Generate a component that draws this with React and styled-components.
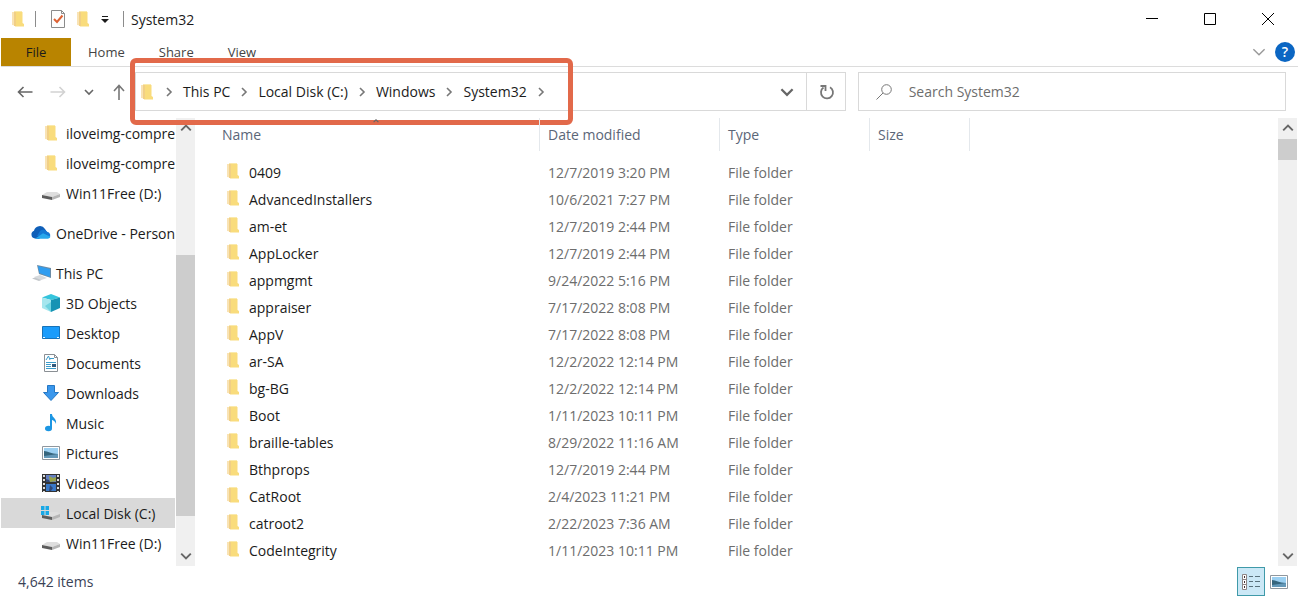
import React, { useState } from "react";
import styled, { createGlobalStyle } from "styled-components";

const GlobalStyle = createGlobalStyle`
    * {
        box-sizing: border-box;
    }

    body {
        margin: 0;
        background: #fff;
        color: #1b1b1b;
        font-family: "Open Sans", "Noto Sans", sans-serif;
        font-size: 14px;
        line-height: 20px;
    }

    button, input {
        font: inherit;
        color: inherit;
    }

    button {
        padding: 0;
        border: 0;
        background: none;
    }

    a {
        color: inherit;
        text-decoration: none;
    }

    ul, ol {
        margin: 0;
        padding: 0;
        list-style: none;
    }

    svg {
        display: block;
        flex: none;
    }
`;

/* ---------- icons ---------- */

const FolderIcon = () => (
    <svg width="12" height="16" viewBox="0 0 12 16">
        <path d="M0 1h3v13.500L0 14z" fill="#f9e3b4" />
        <path d="M2 0h8v11H2z" fill="#fae9ac" />
        <path d="M4 1h6.500v11l1.500 1v2.500H3z" fill="#f9dc7c" />
        <path d="M2 1h2v14H2z" fill="#f1cf86" />
    </svg>
);

const CheckDocIcon = () => (
    <svg width="14" height="18" viewBox="0 0 14 18" fill="none">
        <path d="M.5.5h10l3 3v14H.5z" fill="#fdfdfd" stroke="#8b8b8b" />
        <path d="M10.500.5v3h3" stroke="#8b8b8b" />
        <path d="M3 9l3 3 5.500-6.500" stroke="#dd6234" strokeWidth="2" />
    </svg>
);

const MoreIcon = () => (
    <svg width="8" height="8" viewBox="0 0 8 8">
        <path d="M1 1h6v1H1zM0 4h8L4 8z" fill="#1b1b1b" />
    </svg>
);

const ArrowIcon = ({ dir, color }) => (
    <svg width="16" height="16" viewBox="0 0 16 16" fill="none" stroke={color} strokeWidth="1.600">
        {dir === "left" && <path d="M15.500 8H1.500M6.500 3l-5 5 5 5" />}
        {dir === "right" && <path d="M.5 8h14M9.500 3l5 5-5 5" />}
        {dir === "up" && <path d="M8 16V2M3 7l5-5.500L13 7" />}
    </svg>
);

const rotations = { down: 0, left: 90, up: 180, right: 270 };

const Chevron = ({ dir = "down", size = 10, color = "#666", weight = 1.6 }) => (
    <svg width={size} height={size} viewBox="0 0 10 10" fill="none">
        <path
            d="M1 3l4 4 4-4"
            stroke={color}
            strokeWidth={weight}
            transform={`rotate(${rotations[dir]} 5 5)`}
        />
    </svg>
);

const RefreshIcon = () => (
    <svg width="16" height="16" viewBox="0 0 16 16" fill="none" stroke="#777" strokeWidth="1.800">
        <path d="M11 3.200a6 6 0 1 1-6.500.3" />
        <path d="M1.500 2h5v5" />
    </svg>
);

const SearchIcon = () => (
    <svg width="16" height="16" viewBox="0 0 16 16" fill="none" stroke="#777">
        <circle cx="10.500" cy="5.500" r="4.800" />
        <path d="M7 9L.5 15.500" />
    </svg>
);

const DriveShape = () => (
    <>
        <path d="M1 12l5-3h10l3 2-8 3z" fill="#dedede" />
        <path d="M11 14l8-3v3l-8 3z" fill="#b5b5b5" />
        <path d="M1 12l10 2v3L1 15z" fill="#5c5c5c" />
    </>
);

const DriveIcon = () => (
    <svg width="20" height="20" viewBox="0 0 20 20"><DriveShape /></svg>
);

const SystemDriveIcon = () => (
    <svg width="20" height="20" viewBox="0 0 20 20">
        <DriveShape />
        <path d="M0 3h3.500v4H0zM4.500 3H8v4H4.500zM0 8h3.500v4H0zM4.500 8H8v4H4.500z" fill="#18a8e6" />
    </svg>
);

const CloudIcon = () => (
    <svg width="20" height="20" viewBox="0 0 20 20">
        <path d="M4 15.500a4 4 0 0 1-1-7.700A6 6 0 0 1 14 6l2 3-8 7z" fill="#0f5fb8" />
        <path d="M9 8a4.500 4.500 0 0 1 7 .8 3.500 3.500 0 0 1 2 6.200L6 13z" fill="#1478d4" />
        <path d="M4 15.700l8-5.500 7.500 3.600a3 3 0 0 1-2.500 1.900z" fill="#29a8ec" />
    </svg>
);

const ComputerIcon = () => (
    <svg width="20" height="20" viewBox="0 0 20 20">
        <path d="M6 2l14 3v10L8 11z" fill="#6b8ca6" />
        <path d="M7 3l12 3v8L8.500 10z" fill="#2f9df0" />
        <path d="M3 14l6-2 7 3-7 2.500z" fill="#d7dadd" />
        <path d="M1 15.500l3-1 6 2.500-2 1z" fill="#c2c6ca" />
    </svg>
);

const CubeIcon = () => (
    <svg width="20" height="20" viewBox="0 0 20 20">
        <path d="M10 1l9 3.500L10 7 1 4.500z" fill="#35c4dc" />
        <path d="M1 4.500L10 7v12l-9-4z" fill="#a5e6ee" />
        <path d="M10 7l9-2.500V15l-9 4z" fill="#1793b4" />
        <path d="M4 13l6-4v10z" fill="#6fd3e0" />
    </svg>
);

const DesktopIcon = () => (
    <svg width="20" height="20" viewBox="0 0 20 20">
        <path d="M1.500 3.500h17v12h-17z" fill="#1a9cfb" stroke="#1873b8" />
        <path d="M2 14h2v1H2zM16 14h2v1h-2z" fill="#e9f6ff" />
    </svg>
);

const DocumentIcon = () => (
    <svg width="20" height="20" viewBox="0 0 20 20">
        <path d="M3.500 1.500h10l3 3v14h-13z" fill="#fff" stroke="#8a8f94" />
        <path d="M13.500 1.500v3h3" fill="none" stroke="#8a8f94" />
        <path d="M5 7l2.500-4L9 7M9 5.500h4M5 9.500h10M5 11.500h5M5 13.500h5M5 15.500h10" fill="none" stroke="#3b9ccb" />
        <path d="M11 11h4v3h-4z" fill="#31597c" />
    </svg>
);

const DownloadIcon = () => (
    <svg width="20" height="20" viewBox="0 0 20 20">
        <path d="M6.500 2.500h7v7h4L10 17.500l-7.500-8h4z" fill="#3a97ec" stroke="#2577c4" />
    </svg>
);

const MusicIcon = () => (
    <svg width="20" height="20" viewBox="0 0 20 20" fill="#1c96e3">
        <path d="M9 1h2c0 4 5 4 4 10-1-3-3-4-4-4v8H9z" />
        <ellipse cx="7.500" cy="15.500" rx="3.500" ry="2.700" />
    </svg>
);

const PictureIcon = () => (
    <svg width="20" height="20" viewBox="0 0 20 20">
        <path d="M1.500 3.500h17v13h-17z" fill="#fff" stroke="#8f979e" />
        <path d="M3 5h14v10H3z" fill="#9bd0f2" />
        <path d="M3 8c4 0 7 3 14 3v4H3z" fill="#35657d" />
        <path d="M3 13l7-1 7-1v4H3z" fill="#6398b8" />
    </svg>
);

const VideoIcon = () => (
    <svg width="20" height="20" viewBox="0 0 20 20">
        <path d="M1 1h18v18H1z" fill="#333" />
        <path d="M5 2h10v7H5z" fill="#647fc0" />
        <path d="M5 11h10v7H5z" fill="#3978c6" />
        <path d="M8 3l4 2 3-1v4l-6 1z" fill="#97a34a" />
        <path d="M5 6l3 1 1 2H5zM9 12l3 3-2 3H8z" fill="#314876" />
        <path d="M3 2v17M17 2v17" stroke="#ddd" strokeWidth="2" strokeDasharray="2 2" />
    </svg>
);

const DetailsIcon = () => (
    <svg width="20" height="18" viewBox="0 0 20 18" fill="none">
        <path d="M1.500 1.500h4v15h-4zM1.500 6.500h4M1.500 11.500h4" fill="#fff" stroke="#8d8585" />
        <path d="M3 3h1v2H3zM3 8h1v2H3zM3 13h1v2H3z" fill="#402f2f" />
        <path d="M8 3.500h4M14 3.500h5M8 8.500h4M14 8.500h5M8 13.500h4M14 13.500h5" stroke="#59717c" />
    </svg>
);

/* ---------- data ---------- */

const tabs = ["Home", "Share", "View"];

const path = ["This PC", "Local Disk (C:)", "Windows", "System32"];

const places = [
    [
        { name: "iloveimg-compressed", icon: FolderIcon, level: 2 },
        { name: "iloveimg-compressed (1)", icon: FolderIcon, level: 2 },
        { name: "Win11Free (D:)", icon: DriveIcon, level: 2 },
    ],
    [{ name: "OneDrive - Personal", icon: CloudIcon, level: 1 }],
    [
        { name: "This PC", icon: ComputerIcon, level: 1 },
        { name: "3D Objects", icon: CubeIcon, level: 2 },
        { name: "Desktop", icon: DesktopIcon, level: 2 },
        { name: "Documents", icon: DocumentIcon, level: 2 },
        { name: "Downloads", icon: DownloadIcon, level: 2 },
        { name: "Music", icon: MusicIcon, level: 2 },
        { name: "Pictures", icon: PictureIcon, level: 2 },
        { name: "Videos", icon: VideoIcon, level: 2 },
        { name: "Local Disk (C:)", icon: SystemDriveIcon, level: 2 },
        { name: "Win11Free (D:)", icon: DriveIcon, level: 2 },
    ],
];

const files = [
    ["0409", "12/7/2019 3:20 PM"],
    ["AdvancedInstallers", "10/6/2021 7:27 PM"],
    ["am-et", "12/7/2019 2:44 PM"],
    ["AppLocker", "12/7/2019 2:44 PM"],
    ["appmgmt", "9/24/2022 5:16 PM"],
    ["appraiser", "7/17/2022 8:08 PM"],
    ["AppV", "7/17/2022 8:08 PM"],
    ["ar-SA", "12/2/2022 12:14 PM"],
    ["bg-BG", "12/2/2022 12:14 PM"],
    ["Boot", "1/11/2023 10:11 PM"],
    ["braille-tables", "8/29/2022 11:16 AM"],
    ["Bthprops", "12/7/2019 2:44 PM"],
    ["CatRoot", "2/4/2023 11:21 PM"],
    ["catroot2", "2/22/2023 7:36 AM"],
    ["CodeIntegrity", "1/11/2023 10:11 PM"],
];

/* ---------- parts ---------- */

const ScrollBar = ({ label, before, size }) => (
    <Track>
        <ScrollButton aria-label={`Scroll ${label} up`}><Chevron dir="up" size={12} /></ScrollButton>
        <Spacer $size={before} />
        <Thumb $size={size} />
        <Spacer />
        <ScrollButton aria-label={`Scroll ${label} down`}><Chevron size={12} /></ScrollButton>
    </Track>
);

const TitleBar = () => (
    <Title>
        <AppIcon><FolderIcon /></AppIcon>
        <Divider />
        <QuickButton $width={29} aria-label="Properties"><CheckDocIcon /></QuickButton>
        <QuickButton $width={22} aria-label="New folder"><FolderIcon /></QuickButton>
        <QuickButton $width={22} aria-label="Customize toolbar"><MoreIcon /></QuickButton>
        <Divider />
        <Caption>System32</Caption>
        <WindowButton aria-label="Minimize">
            <svg width="12" height="12" stroke="#000"><path d="M0 5.500h12" /></svg>
        </WindowButton>
        <WindowButton aria-label="Maximize">
            <svg width="12" height="12" fill="none" stroke="#000"><path d="M.5.5h11v11H.5z" /></svg>
        </WindowButton>
        <WindowButton aria-label="Close">
            <svg width="12" height="12" stroke="#000"><path d="M0 0l12 12M12 0L0 12" /></svg>
        </WindowButton>
    </Title>
);

const Ribbon = () => (
    <RibbonBar>
        <FileTab>File</FileTab>
        {tabs.map((tab) => <Tab key={tab}>{tab}</Tab>)}
        <RibbonTools>
            <button aria-label="Expand the ribbon"><Chevron size={14} color="#999" weight={1} /></button>
            <HelpButton aria-label="Help">?</HelpButton>
        </RibbonTools>
    </RibbonBar>
);

const Toolbar = () => (
    <Bar>
        <Arrows>
            <button aria-label="Back"><ArrowIcon dir="left" color="#666" /></button>
            <button aria-label="Forward"><ArrowIcon dir="right" color="#d2d2d2" /></button>
            <button aria-label="Recent locations"><Chevron /></button>
            <button aria-label="Up"><ArrowIcon dir="up" color="#777" /></button>
        </Arrows>
        <Address>
            <Crumbs>
                <CrumbIcon><FolderIcon /></CrumbIcon>
                <CrumbGap><Chevron dir="right" color="#777" /></CrumbGap>
                {path.map((part) => (
                    <Crumb key={part}>
                        <a href="#">{part}</a>
                        <CrumbGap><Chevron dir="right" color="#777" /></CrumbGap>
                    </Crumb>
                ))}
                <Marker />
            </Crumbs>
            <AddressButton aria-label="Previous locations"><Chevron size={14} /></AddressButton>
            <AddressButton aria-label="Refresh" $divided><RefreshIcon /></AddressButton>
        </Address>
        <Search>
            <SearchIcon />
            <input type="text" aria-label="Search System32" placeholder="Search System32" />
        </Search>
    </Bar>
);

const SideBar = () => {
    const [selected, setSelected] = useState("2-8");

    return (
        <Side>
            <Tree aria-label="Folders">
                {places.map((group, g) => (
                    <ul key={g}>
                        {group.map(({ name, icon: Icon, level }, i) => (
                            <li key={name}>
                                <Place
                                    href="#"
                                    $level={level}
                                    $selected={selected === `${g}-${i}`}
                                    onClick={() => setSelected(`${g}-${i}`)}
                                >
                                    <IconBox><Icon /></IconBox>
                                    <PlaceName>{name}</PlaceName>
                                </Place>
                            </li>
                        ))}
                    </ul>
                ))}
            </Tree>
            <ScrollBar label="folders" before={117} size={261} />
        </Side>
    );
};

const FileList = () => (
    <Files>
        <FileScroll>
            <Table>
                <thead>
                    <tr>
                        <Head $width={326}>
                            Name
                            <SortMark><Chevron dir="up" size={6} weight={2} /></SortMark>
                        </Head>
                        <Head $width={180}>Date modified</Head>
                        <Head $width={150}>Type</Head>
                        <Head $width={100}>Size</Head>
                    </tr>
                </thead>
                <tbody>
                    {files.map(([name, date]) => (
                        <tr key={name}>
                            <Cell><FileName><FolderIcon />{name}</FileName></Cell>
                            <Cell $dim>{date}</Cell>
                            <Cell $dim>File folder</Cell>
                            <Cell />
                        </tr>
                    ))}
                </tbody>
            </Table>
        </FileScroll>
        <ScrollBar label="files" before={1} size={21} />
    </Files>
);

const App = () => (
    <Window>
        <GlobalStyle />
        <TitleBar />
        <Ribbon />
        <Toolbar />
        <Content>
            <SideBar />
            <FileList />
        </Content>
        <Status>
            <span>4,642 items</span>
            <ViewButtons>
                <ViewButton aria-label="Details" $active><DetailsIcon /></ViewButton>
                <ViewButton aria-label="Large icons"><PictureIcon /></ViewButton>
            </ViewButtons>
        </Status>
    </Window>
);

export default App;

/* ---------- styles ---------- */

const Window = styled.div`
    display: flex;
    flex-direction: column;
    height: 100vh;
    min-width: 960px;
    padding: 0 1px;
    overflow: hidden;
`;

const Title = styled.header`
    display: flex;
    align-items: center;
    flex: none;
    height: 38px;
    padding: 0 1px 0 11px;
`;

const AppIcon = styled.span`
    width: 16px;
`;

const Divider = styled.span`
    width: 1px;
    height: 16px;
    margin: 0 7px;
    background: #8c8c8c;
`;

const QuickButton = styled.button`
    display: flex;
    justify-content: center;
    width: ${({ $width }) => $width}px;
`;

const Caption = styled.h1`
    flex: 1;
    margin: 0;
    padding-top: 2px;
    font-size: 14px;
    font-weight: 400;
`;

const WindowButton = styled.button`
    display: flex;
    align-items: center;
    justify-content: center;
    width: 58px;
    height: 38px;
`;

const RibbonBar = styled.nav`
    display: flex;
    flex: none;
    height: 29px;
    border-bottom: 1px solid #dcdcdc;
    font-size: 13px;
`;

const FileTab = styled.button`
    width: 70px;
    background: #b98400;
`;

const Tab = styled.button`
    padding: 0 17px;
    color: #444;
`;

const RibbonTools = styled.div`
    display: flex;
    align-items: center;
    gap: 9px;
    margin-left: auto;
    padding-right: 3px;
`;

const HelpButton = styled.button`
    width: 20px;
    height: 20px;
    border-radius: 50%;
    background: #0b66c3;
    color: #fff;
    font-size: 14px;
    font-weight: 600;
    line-height: 20px;
`;

const Bar = styled.div`
    display: flex;
    align-items: center;
    flex: none;
    height: 51px;
    padding: 0 12px 2px 0;
`;

const Arrows = styled.div`
    display: flex;
    align-items: center;
    justify-content: space-between;
    width: 134px;
    padding: 0 8px 0 16px;
`;

const Address = styled.div`
    display: flex;
    flex: 1;
    height: 39px;
    margin-right: 12px;
    border: 1px solid #d9d9d9;
`;

const Crumbs = styled.div`
    position: relative;
    display: flex;
    align-items: center;
    margin-right: auto;
    padding-left: 5px;
    white-space: nowrap;
`;

const CrumbIcon = styled.span`
    width: 14px;
`;

const Crumb = styled.span`
    display: flex;
    align-items: center;
`;

const CrumbGap = styled.span`
    display: flex;
    justify-content: center;
    width: 28px;
`;

const Marker = styled.span`
    position: absolute;
    inset: -15px -18px -15px -6px;
    border: 5px solid #e2694a;
    border-radius: 6px;
    pointer-events: none;
`;

const AddressButton = styled.button`
    display: flex;
    align-items: center;
    justify-content: center;
    width: 39px;
    padding-left: 2px;
    border-left: ${({ $divided }) => ($divided ? "1px solid #d9d9d9" : "0")};
`;

const Search = styled.label`
    display: flex;
    align-items: center;
    flex: 0 0 calc(100% / 3);
    gap: 17px;
    height: 39px;
    padding-left: 17px;
    border: 1px solid #d9d9d9;

    input {
        flex: 1;
        min-width: 0;
        padding: 0;
        border: 0;
        outline: 0;
    }

    input::placeholder {
        color: #6d6d6d;
        opacity: 1;
    }
`;

const Content = styled.div`
    display: flex;
    flex: 1;
    min-height: 0;
`;

const Side = styled.aside`
    display: flex;
    width: 194px;
`;

const Tree = styled.nav`
    display: flex;
    flex-direction: column;
    gap: 10px;
    flex: 1;
    min-width: 0;
    padding-right: 1px;
    overflow: hidden;
    white-space: nowrap;
`;

const Place = styled.a`
    display: flex;
    align-items: center;
    gap: 5px;
    height: 30px;
    padding-left: ${({ $level }) => 20 + $level * 10}px;
    overflow: hidden;
    background: ${({ $selected }) => ($selected ? "#d9d9d9" : "transparent")};
`;

const IconBox = styled.span`
    display: flex;
    justify-content: center;
    flex: none;
    width: 20px;
`;

const PlaceName = styled.span`
    padding-top: 2px;
`;

const Track = styled.div`
    display: flex;
    flex-direction: column;
    flex: none;
    width: 19px;
    background: #f0f0f0;
`;

const ScrollButton = styled.button`
    display: flex;
    align-items: center;
    justify-content: center;
    height: 20px;
`;

const Spacer = styled.span`
    flex: ${({ $size }) => ($size ? `0 0 ${$size}px` : "1")};
`;

const Thumb = styled.span`
    flex: 0 1 ${({ $size }) => $size}px;
    background: #cdcdcd;
`;

const Files = styled.main`
    display: flex;
    flex: 1;
    min-width: 0;
    padding: 0 1px 0 19px;
`;

const FileScroll = styled.div`
    flex: 1;
    min-width: 0;
    overflow: hidden;
`;

const Table = styled.table`
    width: 756px;
    table-layout: fixed;
    border-collapse: separate;
    border-spacing: 0;
    white-space: nowrap;

    thead::after {
        content: "";
        display: block;
        height: 8px;
    }
`;

const Head = styled.th`
    position: relative;
    width: ${({ $width }) => $width}px;
    height: 33px;
    padding: 0 8px;
    border-right: 1px solid #e4e8ec;
    color: #5b6678;
    font-weight: 400;
    text-align: left;
`;

const SortMark = styled.span`
    position: absolute;
    top: 0;
    left: 49%;
`;

const Cell = styled.td`
    height: 27px;
    padding: 0 8px;
    color: ${({ $dim }) => ($dim ? "#6d6d6d" : "inherit")};
    line-height: 22px;
`;

const FileName = styled.span`
    display: flex;
    align-items: flex-start;
    gap: 10px;
    padding-left: 5px;

    svg {
        margin-top: 1px;
    }
`;

const Status = styled.footer`
    display: flex;
    align-items: center;
    justify-content: space-between;
    flex: none;
    height: 31px;
    padding: 0 5px 0 17px;
    color: #3a4256;
`;

const ViewButtons = styled.div`
    display: flex;
`;

const ViewButton = styled.button`
    display: flex;
    align-items: center;
    justify-content: center;
    width: 28px;
    height: 29px;
    background: ${({ $active }) => ($active ? "#cbe8f6" : "transparent")};
    border: 1px solid ${({ $active }) => ($active ? "#3f9aa9" : "transparent")};
`;
